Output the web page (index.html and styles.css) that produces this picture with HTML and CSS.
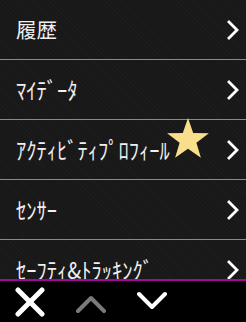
FILE: index.html
```html
<!DOCTYPE html>
<html lang="ja">
<head>
<meta charset="utf-8">
<link rel="stylesheet" href="styles.css">
</head>
<body>
<div class="screen">
  <ul class="menu">
    <li class="row"><span class="label">履歴</span><svg class="chev" viewBox="0 0 12 20"><polyline points="2,2 10,10 2,18"/></svg></li>
    <li class="row"><span class="label kana">ﾏｲﾃﾞｰﾀ</span><svg class="chev" viewBox="0 0 12 20"><polyline points="2,2 10,10 2,18"/></svg></li>
    <li class="row"><span class="label kana">ｱｸﾃｨﾋﾞﾃｨﾌﾟﾛﾌｨｰﾙ</span><svg class="chev" viewBox="0 0 12 20"><polyline points="2,2 10,10 2,18"/></svg>
      <svg class="star" viewBox="0 0 46 46"><polygon points="23,1 28.2,15.9 43.9,16.2 31.4,25.7 35.9,40.8 23,31.8 10.1,40.8 14.6,25.7 2.1,16.2 17.8,15.9"/></svg>
    </li>
    <li class="row"><span class="label kana">ｾﾝｻｰ</span><svg class="chev" viewBox="0 0 12 20"><polyline points="2,2 10,10 2,18"/></svg></li>
    <li class="row"><span class="label kana">ｾｰﾌﾃｨ&amp;ﾄﾗｯｷﾝｸﾞ</span><svg class="chev" viewBox="0 0 12 20"><polyline points="2,2 10,10 2,18"/></svg></li>
  </ul>
  <div class="bar">
    <svg class="btn close" viewBox="0 0 30 30"><line x1="3" y1="3" x2="27" y2="27"/><line x1="27" y1="3" x2="3" y2="27"/></svg>
    <svg class="btn up" viewBox="0 0 30 30"><polyline points="2,24 15,11 28,24"/></svg>
    <svg class="btn down" viewBox="0 0 30 30"><polyline points="2,7 15,20 28,7"/></svg>
  </div>
</div>
</body>
</html>
```
FILE: styles.css
```css
html, body {
  margin: 0;
  padding: 0;
  background: #000;
}
.screen {
  width: 246px;
  height: 322px;
  display: flex;
  flex-direction: column;
  overflow: hidden;
  font-family: "Noto Sans CJK JP", "Noto Sans", sans-serif;
}
.menu {
  list-style: none;
  margin: 0;
  padding: 0;
  height: 279px;
  flex: none;
  overflow: hidden;
  background-color: #1a1a1a;
  background-image: repeating-linear-gradient(45deg, #1c1c1c 0 1px, #181818 1px 3px);
  border-bottom: 2px solid #a0079a;
}
.row {
  position: relative;
  height: 59px;
  flex: none;
  display: flex;
  align-items: center;
  justify-content: space-between;
  padding: 0 7px 0 16px;
  border-bottom: 1px solid #8a8a8a;
}
.label {
  display: inline-block;
  color: #f0f0f0;
  font-size: 20.5px;
  line-height: 1;
  white-space: nowrap;
}
.kana {
  transform: scaleY(1.1);
}
.chev {
  width: 12px;
  height: 20px;
  flex: none;
}
.chev polyline {
  fill: none;
  stroke: #fff;
  stroke-width: 2.8;
  stroke-linecap: square;
  stroke-linejoin: miter;
}
.star {
  position: absolute;
  left: 165px;
  top: -3px;
  width: 46px;
  height: 46px;
}
.star polygon {
  fill: #f9df8b;
}
.bar {
  flex: 1;
  background: #000;
  display: flex;
  align-items: center;
  gap: 31px;
  padding-left: 15px;
}
.btn {
  width: 30px;
  height: 30px;
  flex: none;
}
.btn line, .btn polyline {
  fill: none;
  stroke-linecap: round;
  stroke-linejoin: round;
}
.close line {
  stroke: #fff;
  stroke-width: 5;
}
.up polyline {
  stroke: #7a7a7a;
  stroke-width: 4;
}
.down polyline {
  stroke: #fff;
  stroke-width: 4;
}
```
